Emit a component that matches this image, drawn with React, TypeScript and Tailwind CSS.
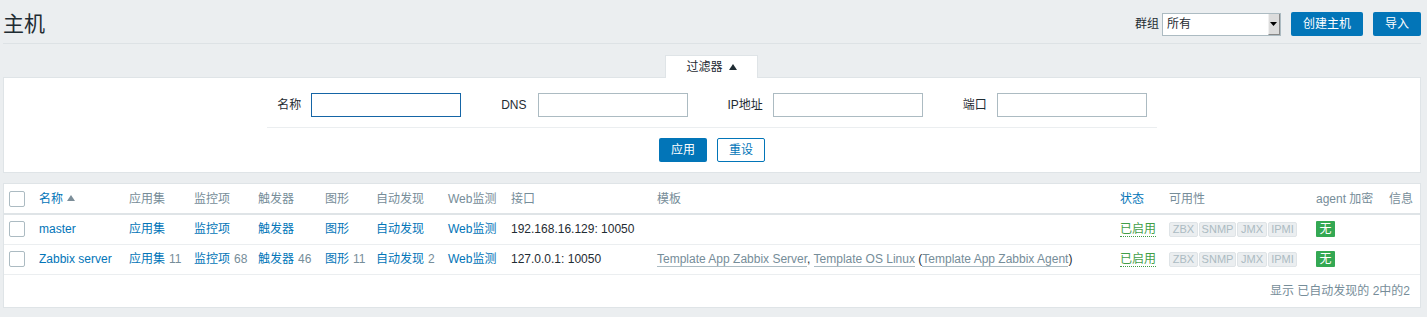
import { useState } from 'react';

const hosts = [
  {
    name: 'master',
    apps: null,
    items: null,
    triggers: null,
    graphs: null,
    discovery: null,
    iface: '192.168.16.129: 10050',
    templates: false,
  },
  {
    name: 'Zabbix server',
    apps: 11,
    items: 68,
    triggers: 46,
    graphs: 11,
    discovery: 2,
    iface: '127.0.0.1: 10050',
    templates: true,
  },
];

const avail = [
  { label: 'ZBX', w: 'w-[29px]' },
  { label: 'SNMP', w: 'w-[37px]' },
  { label: 'JMX', w: 'w-[30px]' },
  { label: 'IPMI', w: 'w-[29px]' },
];

function Checkbox() {
  return <span className="block w-4 h-4 bg-white border border-[#acbbc2] rounded-[2px]" />;
}

function Count({ n }: { n: number | null }) {
  if (n === null) return null;
  return <span className="text-[#768d99] ml-[4px]">{n}</span>;
}

function TplLink({ children }: { children: string }) {
  return <span className="text-[#768d99] border-b border-[#acbbc2]">{children}</span>;
}

export default function App() {
  const [name, setName] = useState('');

  return (
    <div className="w-full min-h-[317px] bg-[#ebeef0] pl-[3px] pr-[6px] text-[12px] text-[#1f2c33] font-['Liberation_Sans','Noto_Sans_CJK_SC',sans-serif]">
      {/* Header */}
      <div className="flex items-center justify-between pt-[12px] pb-[7px] border-b border-[#dde2e5]">
        <h1 className="text-[21px] leading-[24px] font-normal text-[#1f2c33]">主机</h1>
        <div className="flex items-center">
          <span className="mr-[3px]">群组</span>
          <div className="flex w-[119px] h-[23px] bg-white border border-[#acbbc2]">
            <span className="flex-1 pl-[4px] leading-[21px]">所有</span>
            <span className="w-[12px] h-full bg-[#dcdcdc] border-l border-[#f0f0f0] border-r border-b border-r-[#888] border-b-[#888] flex items-center justify-center">
              <svg width="7" height="4" viewBox="0 0 7 4">
                <path d="M0 0h7L3.5 4z" fill="#000" />
              </svg>
            </span>
          </div>
          <button className="ml-[10px] h-[24px] px-3 bg-[#0275b8] text-white rounded-[2px]">创建主机</button>
          <button className="ml-[10px] h-[24px] px-3 bg-[#0275b8] text-white rounded-[2px]">导入</button>
        </div>
      </div>

      {/* Filter tab */}
      <div className="flex justify-center mt-[11px]">
        <div className="relative z-10 -mb-px mr-[1px] w-[93px] h-[23px] bg-white border border-b-0 border-[#dfe4e7] flex items-center justify-center gap-[6px]">
          <span>过滤器</span>
          <svg width="8" height="6" viewBox="0 0 8 6">
            <path d="M0 6h8L4 0z" fill="#1f2c33" />
          </svg>
        </div>
      </div>

      {/* Filter panel */}
      <div className="bg-white border border-[#dfe4e7] pt-[15px] pb-[10px]">
        <div className="mx-auto w-fit px-[10px] pb-[10px] border-b border-[#ebeef0] flex items-center gap-[40px]">
          <label className="flex items-center gap-[10px]">
            <span>名称</span>
            <input
              autoFocus
              value={name}
              onChange={(e) => setName(e.target.value)}
              className="w-[150px] h-[24px] px-[5px] border border-[#1565a6] outline-none bg-white"
            />
          </label>
          <label className="flex items-center gap-[11px]">
            <span>DNS</span>
            <input className="w-[150px] h-[24px] px-[5px] border border-[#acbbc2] outline-none bg-white" />
          </label>
          <label className="flex items-center gap-[10px]">
            <span>IP地址</span>
            <input className="w-[150px] h-[24px] px-[5px] border border-[#acbbc2] outline-none bg-white" />
          </label>
          <label className="flex items-center gap-[10px]">
            <span>端口</span>
            <input className="w-[150px] h-[24px] px-[5px] border border-[#acbbc2] outline-none bg-white" />
          </label>
        </div>
        <div className="flex justify-center gap-[10px] mt-[10px]">
          <button className="w-[48px] h-[24px] bg-[#0275b8] text-white rounded-[2px]">应用</button>
          <button className="w-[48px] h-[24px] bg-white text-[#0275b8] border border-[#0275b8] rounded-[2px]">重设</button>
        </div>
      </div>

      {/* Hosts table */}
      <div className="mt-[10px] bg-white border border-[#dfe4e7]">
        <table className="w-full table-fixed border-collapse">
          <colgroup>
            <col className="w-[30px]" />
            <col className="w-[90px]" />
            <col className="w-[65px]" />
            <col className="w-[64px]" />
            <col className="w-[67px]" />
            <col className="w-[51px]" />
            <col className="w-[72px]" />
            <col className="w-[63px]" />
            <col className="w-[146px]" />
            <col />
            <col className="w-[49px]" />
            <col className="w-[147px]" />
            <col className="w-[73px]" />
            <col className="w-[36px]" />
          </colgroup>
          <thead>
            <tr className="h-[30px] border-b-2 border-[#dfe4e7] text-left text-[#768d99]">
              <th className="px-[5px] font-normal"><Checkbox /></th>
              <th className="px-[5px] font-normal text-[#0275b8] whitespace-nowrap">
                名称
                <svg className="inline-block ml-[4px] mb-[2px]" width="8" height="6" viewBox="0 0 8 6">
                  <path d="M0 6h8L4 0z" fill="#7c8e99" />
                </svg>
              </th>
              <th className="px-[5px] font-normal">应用集</th>
              <th className="px-[5px] font-normal">监控项</th>
              <th className="px-[5px] font-normal">触发器</th>
              <th className="px-[5px] font-normal">图形</th>
              <th className="px-[5px] font-normal">自动发现</th>
              <th className="px-[5px] font-normal">Web监测</th>
              <th className="px-[5px] font-normal">接口</th>
              <th className="px-[5px] font-normal">模板</th>
              <th className="px-[5px] font-normal text-[#0275b8]">状态</th>
              <th className="px-[5px] font-normal">可用性</th>
              <th className="px-[5px] font-normal whitespace-nowrap">agent 加密</th>
              <th className="px-[5px] font-normal">信息</th>
            </tr>
          </thead>
          <tbody>
            {hosts.map((h) => (
              <tr key={h.name} className="h-[30px] border-b border-[#ebeef0]">
                <td className="px-[5px]"><Checkbox /></td>
                <td className="px-[5px] text-[#0275b8] whitespace-nowrap">{h.name}</td>
                <td className="px-[5px] whitespace-nowrap"><span className="text-[#0275b8]">应用集</span><Count n={h.apps} /></td>
                <td className="px-[5px] whitespace-nowrap"><span className="text-[#0275b8]">监控项</span><Count n={h.items} /></td>
                <td className="px-[5px] whitespace-nowrap"><span className="text-[#0275b8]">触发器</span><Count n={h.triggers} /></td>
                <td className="px-[5px] whitespace-nowrap"><span className="text-[#0275b8]">图形</span><Count n={h.graphs} /></td>
                <td className="px-[5px] whitespace-nowrap"><span className="text-[#0275b8]">自动发现</span><Count n={h.discovery} /></td>
                <td className="px-[5px] whitespace-nowrap text-[#0275b8]">Web监测</td>
                <td className="px-[5px] whitespace-nowrap">{h.iface}</td>
                <td className="px-[5px] whitespace-nowrap">
                  {h.templates && (
                    <>
                      <TplLink>Template App Zabbix Server</TplLink>,{' '}
                      <TplLink>Template OS Linux</TplLink> (<TplLink>Template App Zabbix Agent</TplLink>)
                    </>
                  )}
                </td>
                <td className="px-[5px] whitespace-nowrap">
                  <span className="text-[#429e47] border-b border-dotted border-[#429e47]">已启用</span>
                </td>
                <td className="px-[5px]">
                  <div className="flex gap-[1px]">
                    {avail.map((a) => (
                      <span
                        key={a.label}
                        className={`${a.w} h-[15px] leading-[13px] text-center text-[11px] text-[#acbbc2] bg-[#ebeef0] border border-[#dfe4e7] rounded-[2px]`}
                      >
                        {a.label}
                      </span>
                    ))}
                  </div>
                </td>
                <td className="px-[5px]">
                  <span className="inline-flex items-center justify-center w-[19px] h-[16px] bg-[#34a853] text-white rounded-[1px]">无</span>
                </td>
                <td className="px-[5px]" />
              </tr>
            ))}
          </tbody>
        </table>
        <div className="h-[32px] flex items-center justify-end pr-[10px] text-[#768d99]">显示 已自动发现的 2中的2</div>
      </div>
    </div>
  );
}
